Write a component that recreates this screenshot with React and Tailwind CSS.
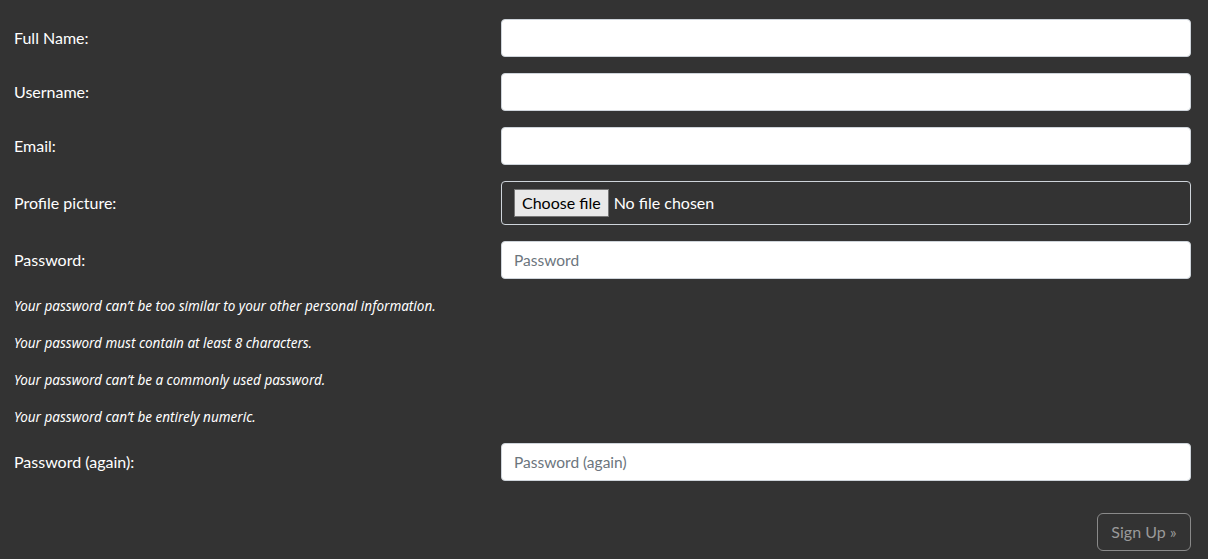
import React from 'react';

const Field = ({ label, placeholder }) => (
  <div className="flex items-center">
    <label className="w-[487px] text-[16px] text-white">{label}</label>
    <input
      type="text"
      placeholder={placeholder}
      className="h-[38px] flex-1 rounded-[4px] border border-[#ced4da] bg-white px-3 text-[15.5px] text-[#495057] outline-none placeholder:text-[#6c757d]"
    />
  </div>
);

const hints = [
  'Your password can’t be too similar to your other personal information.',
  'Your password must contain at least 8 characters.',
  'Your password can’t be a commonly used password.',
  'Your password can’t be entirely numeric.',
];

const App = () => {
  return (
    <div
      className="min-h-[559px] w-full bg-[#333333] pl-[14px] pr-[17px] pt-[19px]"
      style={{ fontFamily: 'Lato, "Noto Sans", sans-serif' }}
    >
      <form className="flex flex-col">
        <div className="flex flex-col gap-4">
          <Field label="Full Name:" />
          <Field label="Username:" />
          <Field label="Email:" />
          <div className="flex items-center">
            <label className="w-[487px] text-[16px] text-white">Profile picture:</label>
            <div className="flex h-[44px] flex-1 items-center gap-[5px] rounded-[4px] border border-[#ced4da] px-3">
              <span className="flex h-[28px] items-center border border-[#767676] bg-[#e9e9e9] px-[7px] text-[16px] text-black">
                Choose file
              </span>
              <span className="text-[16px] text-white">No file chosen</span>
            </div>
          </div>
          <Field label="Password:" placeholder="Password" />
        </div>
        <div className="flex flex-col gap-[17px] pt-[17px] pb-4 font-['Noto_Sans',sans-serif]">
          {hints.map((h) => (
            <p key={h} className="h-[20px] text-[13.5px] italic leading-[20px] text-white">
              {h}
            </p>
          ))}
        </div>
        <Field label="Password (again):" placeholder="Password (again)" />
        <div className="flex justify-end pt-8">
          <button
            type="button"
            className="h-[38px] w-[94px] rounded-[6px] border border-[#8a8a8a] text-[16px] text-[#9a9a9a]"
          >
            Sign Up »
          </button>
        </div>
      </form>
    </div>
  );
};

export default App;
